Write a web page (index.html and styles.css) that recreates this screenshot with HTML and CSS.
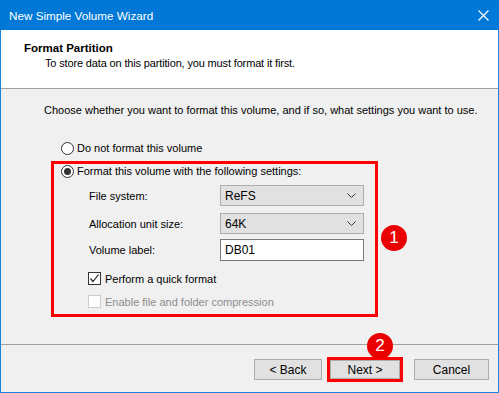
FILE: index.html
```html
<!DOCTYPE html>
<html lang="en">
<head>
    <meta charset="UTF-8">
    <title>New Simple Volume Wizard</title>
    <link rel="stylesheet" href="styles.css">
</head>
<body>
    <div class="window">
        <div class="titlebar">
            <span class="title">New Simple Volume Wizard</span>
            <svg class="close" width="11" height="11" viewBox="0 0 11 11">
                <path d="M0.5 0.5 L10.5 10.5 M10.5 0.5 L0.5 10.5" stroke="#fff" stroke-width="1.2"/>
            </svg>
        </div>

        <div class="header">
            <div class="header-title">Format Partition</div>
            <div class="header-sub">To store data on this partition, you must format it first.</div>
        </div>

        <div class="content">
            <p class="intro">Choose whether you want to format this volume, and if so, what settings you want to use.</p>

            <div class="option first">
                <span class="radio"></span>
                <span>Do not format this volume</span>
            </div>

            <div class="highlight">
                <div class="option">
                    <span class="radio checked"></span>
                    <span>Format this volume with the following settings:</span>
                </div>

                <div class="field">
                    <label>File system:</label>
                    <div class="combo">
                        <span>ReFS</span>
                        <svg width="9" height="5" viewBox="0 0 9 5"><path d="M0.5 0.5 L4.5 4.5 L8.5 0.5" fill="none" stroke="#333"/></svg>
                    </div>
                </div>
                <div class="field">
                    <label>Allocation unit size:</label>
                    <div class="combo">
                        <span>64K</span>
                        <svg width="9" height="5" viewBox="0 0 9 5"><path d="M0.5 0.5 L4.5 4.5 L8.5 0.5" fill="none" stroke="#333"/></svg>
                    </div>
                </div>
                <div class="field label-field">
                    <label>Volume label:</label>
                    <div class="textbox">DB01</div>
                </div>

                <div class="check-row">
                    <span class="checkbox">
                        <svg width="11" height="11" viewBox="0 0 11 11"><path d="M1.5 5.5 L4 8.5 L9.5 1.5" fill="none" stroke="#222" stroke-width="1.2"/></svg>
                    </span>
                    <span>Perform a quick format</span>
                </div>
                <div class="check-row disabled">
                    <span class="checkbox"></span>
                    <span>Enable file and folder compression</span>
                </div>

                <span class="badge badge-one">1</span>
            </div>
        </div>

        <div class="footer">
            <button class="btn">&lt; Back</button>
            <div class="next-wrap">
                <button class="btn">Next &gt;</button>
                <span class="badge badge-two">2</span>
            </div>
            <button class="btn cancel">Cancel</button>
        </div>
    </div>
</body>
</html>
```

FILE: styles.css
```css
* {
    margin: 0;
    padding: 0;
    box-sizing: border-box;
}
body {
    font-family: 'Liberation Sans', Arial, sans-serif;
    font-size: 11px;
    color: #000;
    background-color: #fff;
}
.window {
    width: 499px;
    height: 393px;
    border: 1px solid #1883d7;
    border-top: none;
    display: flex;
    flex-direction: column;
    background-color: #f0f0f0;
}
.titlebar {
    height: 30px;
    margin: 0 -1px;
    background-color: #0078d7;
    color: #fff;
    display: flex;
    align-items: center;
    justify-content: space-between;
    padding: 0 10px 0 9px;
}
.title {
    font-size: 11.7px;
}
.header {
    height: 59px;
    background-color: #fff;
    border-bottom: 1px solid #a0a0a0;
    padding: 11px 0 0 23px;
}
.header-title {
    font-weight: bold;
    font-size: 11.5px;
    line-height: 14px;
}
.header-sub {
    padding-left: 21px;
    margin-top: 1px;
    line-height: 15px;
    letter-spacing: -0.15px;
}
.content {
    height: 256px;
    border-bottom: 1px solid #a0a0a0;
    padding: 14px 0 0 43px;
}
.intro {
    line-height: 15px;
    white-space: nowrap;
}
.option {
    display: flex;
    align-items: center;
    gap: 3px;
    height: 14px;
}
.option.first {
    margin: 23px 0 0 17px;
}
.radio {
    width: 13px;
    height: 13px;
    border: 1px solid #333;
    border-radius: 50%;
    background-color: #fff;
    display: flex;
    align-items: center;
    justify-content: center;
}
.radio.checked::after {
    content: "";
    width: 7px;
    height: 7px;
    border-radius: 50%;
    background-color: #333;
}
.highlight {
    position: relative;
    width: 327px;
    height: 156px;
    margin: 6px 0 0 7px;
    border: 3px solid #f00;
    padding: 0 0 0 7px;
}
.field {
    display: flex;
    align-items: center;
    padding-left: 28px;
    margin-top: 7px;
}
.field:first-of-type {
    margin-top: 9px;
}
.field.label-field {
    margin-top: 5px;
    margin-bottom: 10px;
}
.field label {
    width: 131px;
}
.combo, .textbox {
    width: 144px;
    height: 21px;
    display: flex;
    align-items: center;
    justify-content: space-between;
    padding: 0 7px 0 4px;
    font-size: 12px;
}
.combo {
    background-color: #e1e1e1;
    border: 1px solid #adadad;
}
.textbox {
    height: 22px;
    background-color: #fff;
    border: 1px solid #7a7a7a;
}
.check-row {
    display: flex;
    align-items: center;
    gap: 4px;
    padding-left: 27px;
    height: 15px;
}
.check-row.disabled {
    margin-top: 8px;
    color: #8d8d8d;
}
.checkbox {
    width: 13px;
    height: 13px;
    border: 1px solid #333;
    background-color: #fff;
    display: flex;
    align-items: center;
    justify-content: center;
}
.check-row.disabled .checkbox {
    border-color: #cccccc;
}
.badge {
    position: absolute;
    width: 26px;
    height: 26px;
    border-radius: 50%;
    background-color: #e90000;
    color: #fff;
    font-size: 17px;
    display: flex;
    align-items: center;
    justify-content: center;
}
.badge-one {
    left: 327px;
    top: 61px;
}
.footer {
    flex: 1;
    display: flex;
    align-items: center;
    padding: 2px 0 0 253px;
}
.btn {
    width: 68px;
    height: 21px;
    font-family: 'Liberation Sans', Arial, sans-serif;
    font-size: 12px;
    background-color: #e1e1e1;
    border: 1px solid #adadad;
    color: #000;
}
.next-wrap {
    position: relative;
    margin-left: 5px;
    border: 3px solid #f00;
    width: 76px;
    height: 25px;
}
.next-wrap .btn {
    width: 70px;
    height: 19px;
    display: block;
}
.cancel {
    width: 75px;
    margin-left: 11px;
}
.badge-two {
    left: 37px;
    top: -27px;
}
```
